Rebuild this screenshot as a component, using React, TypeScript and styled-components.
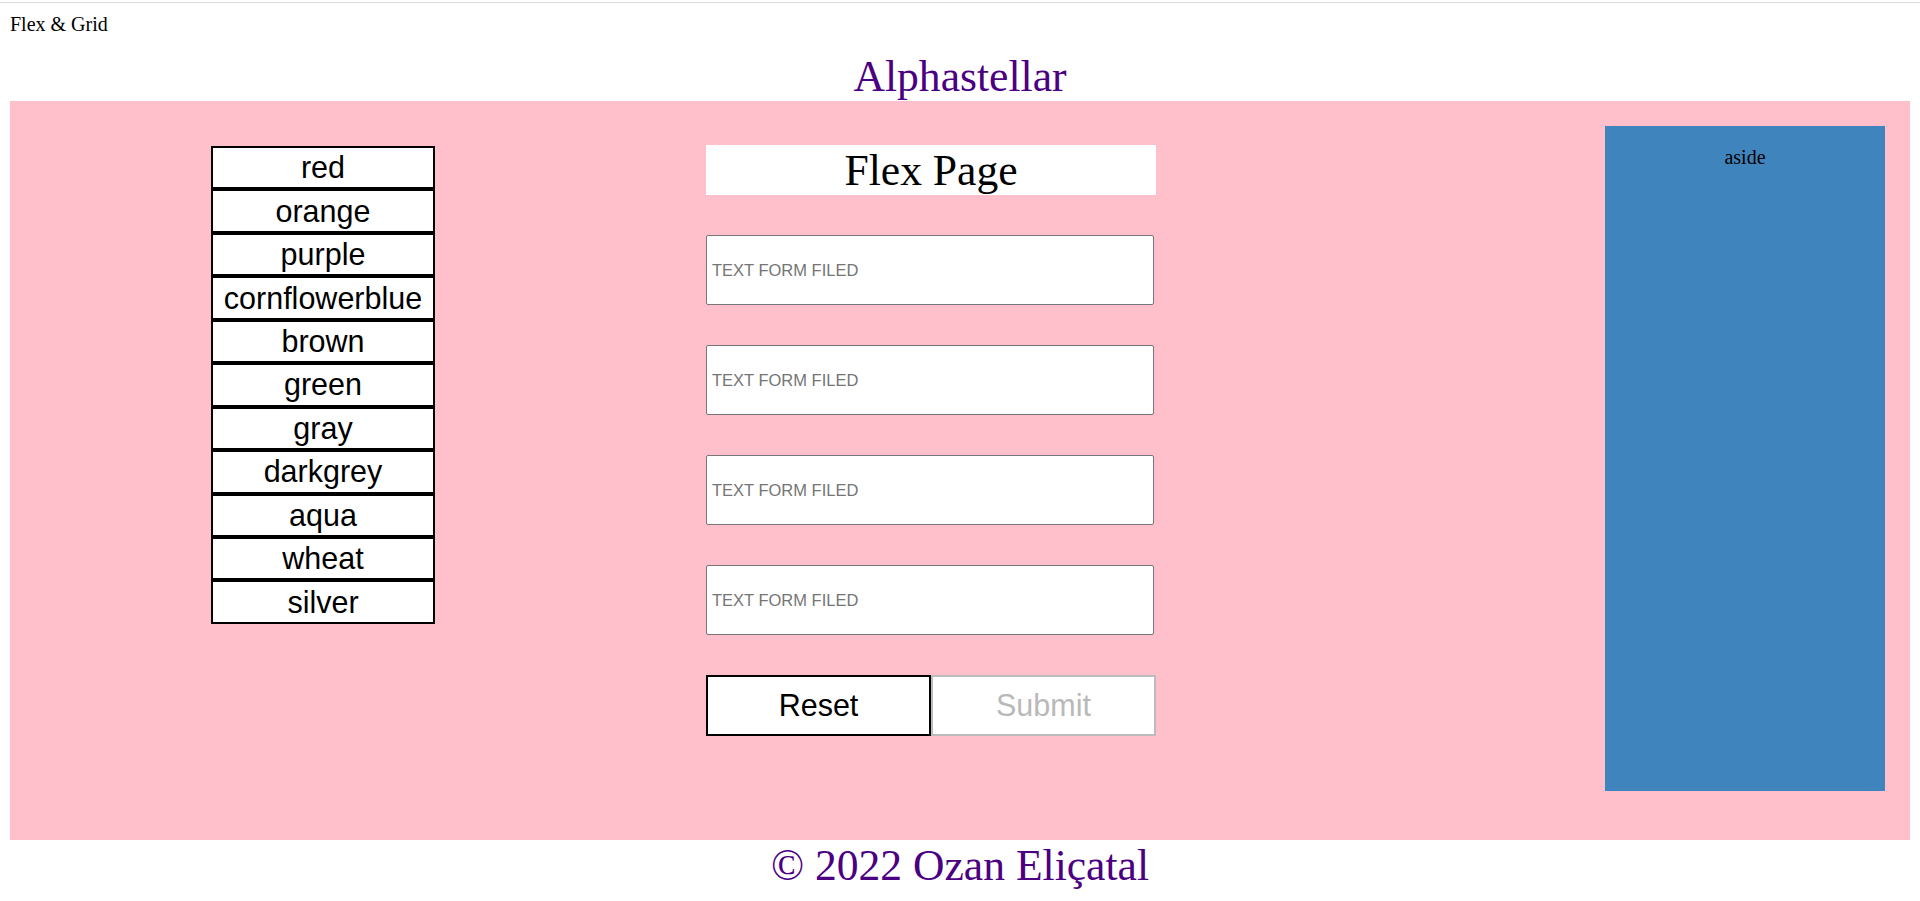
import React from "react";
import styled, { createGlobalStyle } from "styled-components";

const GlobalStyle = createGlobalStyle`
  html, body {
    margin: 0;
    padding: 0;
    background: #ffffff;
  }
  body {
    font-family: "Liberation Serif", "Times New Roman", serif;
    color: #000000;
  }
`;

const TopRule = styled.div`
  height: 1px;
  margin-top: 2px;
  background: #dcdcdc;
`;

const Page = styled.div`
  padding: 10px 10px 0;
`;

const SiteTitle = styled.div`
  font-size: 20px;
  line-height: 23px;
`;

const Header = styled.h1`
  margin: 15px 0 0;
  font-size: 43.6px;
  line-height: 50px;
  font-weight: normal;
  color: indigo;
  text-align: center;
`;

const Main = styled.main`
  display: flex;
  align-items: flex-start;
  box-sizing: border-box;
  height: 739px;
  padding: 0 25px 0 201px;
  background: pink;
`;

const ColorList = styled.ul`
  list-style: none;
  margin: 45px 0 0;
  padding: 0;
  width: 224px;
  font-family: "Liberation Sans", Arial, sans-serif;
  font-size: 30.5px;
`;

const ColorItem = styled.li`
  display: flex;
  align-items: center;
  justify-content: center;
  box-sizing: border-box;
  height: 43.45px;
  border: 2px solid #000000;
  background: #ffffff;
`;

const FormColumn = styled.form`
  display: flex;
  flex-direction: column;
  width: 450px;
  margin: 44px 0 0 271px;
`;

const FormHeading = styled.h2`
  margin: 0 0 40px;
  height: 50px;
  line-height: 50px;
  background: #ffffff;
  font-size: 43.6px;
  font-weight: normal;
  text-align: center;
`;

const TextField = styled.input`
  box-sizing: border-box;
  width: 448px;
  height: 70px;
  margin: 0 0 40px;
  padding: 0 5px;
  border: 1px solid #767676;
  border-radius: 2px;
  background: #ffffff;
  font-family: "Liberation Sans", Arial, sans-serif;
  font-size: 16.5px;
  &::placeholder {
    color: #757575;
  }
`;

const ButtonRow = styled.div`
  display: flex;
`;

const ActionButton = styled.button<{ $muted?: boolean }>`
  box-sizing: border-box;
  width: 225px;
  height: 61px;
  padding: 0;
  background: #ffffff;
  border: 2px solid ${(p) => (p.$muted ? "#bcbcbc" : "#000000")};
  color: ${(p) => (p.$muted ? "#b9b9b9" : "#000000")};
  font-family: "Liberation Sans", Arial, sans-serif;
  font-size: 30.5px;
`;

const Aside = styled.aside`
  margin: 25px 0 0 auto;
  width: 280px;
  height: 665px;
  background: #4084be;
  text-align: center;
`;

const AsideText = styled.p`
  margin: 20px 0;
  font-size: 20px;
  line-height: 23px;
`;

const Footer = styled.footer`
  text-align: center;
  font-size: 43.6px;
  line-height: 50px;
  color: indigo;
`;

const colors = [
  "red",
  "orange",
  "purple",
  "cornflowerblue",
  "brown",
  "green",
  "gray",
  "darkgrey",
  "aqua",
  "wheat",
  "silver",
];

export default function App() {
  return (
    <>
      <GlobalStyle />
      <TopRule />
      <Page>
        <SiteTitle>Flex &amp; Grid</SiteTitle>
        <Header>Alphastellar</Header>
        <Main>
          <ColorList>
            {colors.map((c) => (
              <ColorItem key={c}>{c}</ColorItem>
            ))}
          </ColorList>
          <FormColumn onSubmit={(e) => e.preventDefault()}>
            <FormHeading>Flex Page</FormHeading>
            <TextField placeholder="TEXT FORM FILED" />
            <TextField placeholder="TEXT FORM FILED" />
            <TextField placeholder="TEXT FORM FILED" />
            <TextField placeholder="TEXT FORM FILED" />
            <ButtonRow>
              <ActionButton type="reset">Reset</ActionButton>
              <ActionButton type="submit" $muted disabled>
                Submit
              </ActionButton>
            </ButtonRow>
          </FormColumn>
          <Aside>
            <AsideText>aside</AsideText>
          </Aside>
        </Main>
        <Footer>© 2022 Ozan Eliçatal</Footer>
      </Page>
    </>
  );
}
